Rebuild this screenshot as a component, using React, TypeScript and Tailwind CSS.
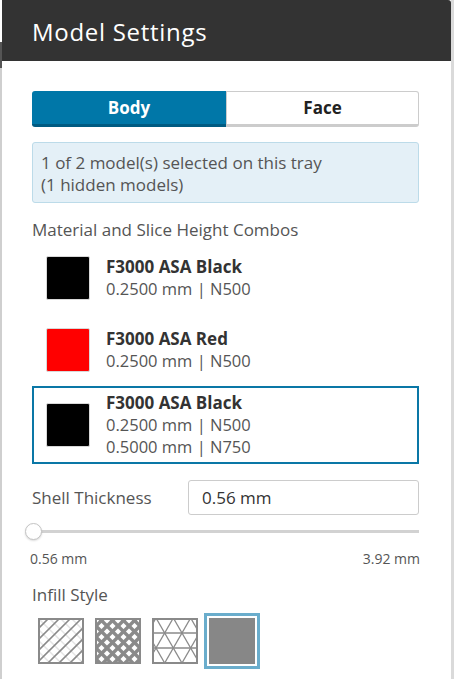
import React from "react";

const font = { fontFamily: '"Open Sans", "Noto Sans", sans-serif' };

function Icon1() {
  const dark = [];
  const light = [];
  for (let c = -44; c <= 92; c += 11) {
    dark.push(<line key={"d" + c} x1={0} y1={c} x2={c} y2={0} stroke="#8a8a8a" strokeWidth={1.6} />);
  }
  for (let c = -44; c <= 46; c += 11) {
    light.push(<line key={"l" + c} x1={0} y1={c} x2={46} y2={c + 46} stroke="#e4e4e4" strokeWidth={1.4} />);
  }
  return (
    <svg width="46" height="46" viewBox="0 0 46 46">
      <rect x="0" y="0" width="46" height="46" fill="#fff" />
      {light}
      {dark}
      <rect x="1" y="1" width="44" height="44" fill="none" stroke="#8a8a8a" strokeWidth={2} />
    </svg>
  );
}

function Icon2() {
  const lines = [];
  for (let c = -46; c <= 92; c += 11) {
    lines.push(<line key={"a" + c} x1={0} y1={c} x2={c} y2={0} stroke="#8a8a8a" strokeWidth={3.4} />);
    lines.push(<line key={"b" + c} x1={0} y1={c - 46} x2={46} y2={c} stroke="#8a8a8a" strokeWidth={3.4} />);
  }
  return (
    <svg width="46" height="46" viewBox="0 0 46 46">
      <rect x="0" y="0" width="46" height="46" fill="#fff" />
      {lines}
      <rect x="1" y="1" width="44" height="44" fill="none" stroke="#8a8a8a" strokeWidth={2} />
    </svg>
  );
}

function Icon3() {
  const h = 15;
  const s = (2 * h) / Math.sqrt(3);
  const k = Math.sqrt(3);
  const lines = [];
  for (let y = h; y < 46; y += h) {
    lines.push(<line key={"h" + y} x1={0} y1={y} x2={46} y2={y} stroke="#8a8a8a" strokeWidth={1.3} />);
  }
  for (let i = -6; i <= 8; i++) {
    const x0 = i * s + 4;
    lines.push(<line key={"p" + i} x1={x0} y1={0} x2={x0 + 46 / k} y2={46} stroke="#8a8a8a" strokeWidth={1.3} />);
    lines.push(<line key={"q" + i} x1={x0} y1={0} x2={x0 - 46 / k} y2={46} stroke="#8a8a8a" strokeWidth={1.3} />);
  }
  return (
    <svg width="46" height="46" viewBox="0 0 46 46">
      <rect x="0" y="0" width="46" height="46" fill="#fff" />
      {lines}
      <rect x="1" y="1" width="44" height="44" fill="none" stroke="#8a8a8a" strokeWidth={2} />
    </svg>
  );
}

function Icon4() {
  return (
    <svg width="46" height="46" viewBox="0 0 46 46">
      <rect x="0" y="0" width="46" height="46" fill="#878787" />
    </svg>
  );
}

function Combo({ color, title, lines, selected, className }: { color: string; title: string; lines: string[]; selected?: boolean; className?: string }) {
  return (
    <div
      className={
        "flex items-center border-2 pl-[12px] py-[4px] " +
        (selected ? "border-[#0a77a6] " : "border-transparent ") +
        (className || "")
      }
    >
      <div className="w-[44px] h-[44px] rounded-[2px] border border-[#d8d8d8] shrink-0" style={{ background: color }} />
      <div className="ml-[16px] flex flex-col">
        <div className="text-[17px] leading-[22px] font-bold text-[#333]">{title}</div>
        {lines.map((l) => (
          <div key={l} className="text-[16.5px] leading-[22px] text-[#555]">{l}</div>
        ))}
      </div>
    </div>
  );
}

export default function App() {
  return (
    <div className="flex w-[457px] h-[679px] bg-white overflow-hidden" style={font}>
      <div className="w-[2px] flex flex-col shrink-0">
        <div className="h-[42px] bg-white" />
        <div className="h-[26px] bg-[#555]" />
        <div className="flex-1 bg-[#cfcfcf]" />
      </div>
      <div className="w-[449px] shrink-0 flex flex-col bg-white">
        <div className="h-[61px] bg-[#333333] rounded-tr-[3px] flex items-center pl-[30px]">
          <span className="text-white text-[24px] leading-[30px] tracking-[0.7px] pt-[3px]">Model Settings</span>
        </div>
        <div className="px-[30px] pr-[32px] flex flex-col">
          <div className="mt-[30px] flex h-[36px]">
            <div className="w-[194px] bg-[#0077a8] border-b-[3px] border-[#005b82] rounded-l-[3px] flex items-center justify-center text-white font-bold text-[17px]">
              Body
            </div>
            <div className="flex-1 bg-white border border-[#cccccc] border-b-[3px] rounded-r-[3px] flex items-center justify-center text-[#222] font-bold text-[17px]">
              Face
            </div>
          </div>
          <div className="mt-[15px] h-[61px] bg-[#e4f0f7] border border-[#bcdbe9] rounded-[3px] pl-[8px] pt-[9px] text-[17px] leading-[22px] text-[#555]">
            <div>1 of 2 model(s) selected on this tray</div>
            <div>(1 hidden models)</div>
          </div>
          <div className="mt-[16px] text-[17px] leading-[22px] text-[#555]">Material and Slice Height Combos</div>
          <Combo className="mt-[9px]" color="#000" title="F3000 ASA Black" lines={["0.2500 mm | N500"]} />
          <Combo className="mt-[16px]" color="#ff0000" title="F3000 ASA Red" lines={["0.2500 mm | N500"]} />
          <Combo className="mt-[8px]" color="#000" selected title="F3000 ASA Black" lines={["0.2500 mm | N500", "0.5000 mm | N750"]} />
          <div className="mt-[16px] flex items-center h-[35px]">
            <div className="w-[156px] text-[17px] text-[#555]">Shell Thickness</div>
            <div className="flex-1 h-[35px] border border-[#cccccc] rounded-[3px] flex items-center pl-[13px] text-[17px] text-[#333]">
              0.56 mm
            </div>
          </div>
          <div className="mt-[8px] relative h-[17px] flex items-center">
            <div className="w-full h-[3px] bg-[#d2d2d2]" />
            <div className="absolute left-[-7px] top-0 w-[17px] h-[17px] rounded-full bg-white border border-[#c4c4c4] shadow-[0_1px_2px_rgba(0,0,0,0.15)]" />
          </div>
          <div className="mt-[10px] flex justify-between text-[14px] leading-[18px] text-[#555] ml-[-2px] mr-[-1px]">
            <span>0.56 mm</span>
            <span>3.92 mm</span>
          </div>
          <div className="mt-[16px] text-[17px] leading-[22px] text-[#555]">Infill Style</div>
          <div className="mt-[7px] flex gap-px ml-px">
            <div className="w-[56px] h-[56px] border-[3px] border-transparent p-[2px]"><Icon1 /></div>
            <div className="w-[56px] h-[56px] border-[3px] border-transparent p-[2px]"><Icon2 /></div>
            <div className="w-[56px] h-[56px] border-[3px] border-transparent p-[2px]"><Icon3 /></div>
            <div className="w-[56px] h-[56px] border-[3px] border-[#6aadcc] p-[2px]"><Icon4 /></div>
          </div>
        </div>
      </div>
      <div className="w-[3px] shrink-0 bg-[#dadada]" />
      <div className="flex-1 bg-white" />
    </div>
  );
}
